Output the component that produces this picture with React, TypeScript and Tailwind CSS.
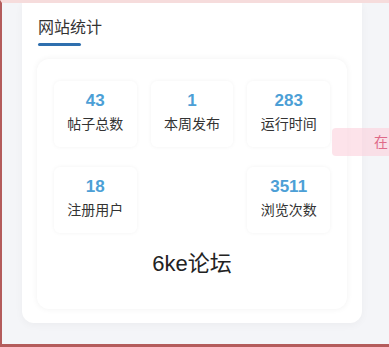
import React from "react";

const STATS = [
  { value: "43", label: "帖子总数" },
  { value: "1", label: "本周发布" },
  { value: "283", label: "运行时间" },
  { value: "18", label: "注册用户" },
  null,
  { value: "3511", label: "浏览次数" },
];

export default function App() {
  return (
    <div
      className="relative w-[389px] h-[347px] overflow-hidden bg-[#f4f5f8] border-l-2 border-b-[3px] border-t-[3px] border-l-[#b45c5c] border-b-[#b45c5c] border-t-[#f6dcdc]"
      style={{ fontFamily: '"Liberation Sans", "Noto Sans CJK SC", sans-serif' }}
    >
      <div className="ml-[20px] w-[340px] h-[320px] bg-white rounded-b-xl shadow-[0_2px_8px_rgba(0,0,0,0.04)] px-[15px] pt-[14px]">
        <div className="pl-[1px]">
          <div className="text-[16px] leading-[22px] text-[#333]">网站统计</div>
          <div className="mt-[4px] w-[43px] h-[3px] rounded-full bg-[#2f6fae]" />
        </div>
        <div className="mt-[13px] h-[250px] rounded-xl bg-white shadow-[0_0_6px_rgba(0,0,0,0.06)] px-[17px] pt-[22px]">
          <div className="grid grid-cols-3 gap-x-[14px] gap-y-[20px]">
            {STATS.map((s, i) =>
              s ? (
                <div
                  key={i}
                  className="h-[66px] rounded-md bg-white shadow-[0_0_4px_rgba(0,0,0,0.05)] flex flex-col items-center pt-[9px]"
                >
                  <div className="text-[17px] leading-[22px] font-bold text-[#4c9fd6]">{s.value}</div>
                  <div className="mt-[2px] text-[14px] leading-[20px] text-[#333]">{s.label}</div>
                </div>
              ) : (
                <div key={i} />
              )
            )}
          </div>
          <div className="mt-[16px] text-center text-[22px] leading-[30px] text-[#222]">6ke论坛</div>
        </div>
      </div>
      <div className="absolute left-[330px] top-[125px] w-[70px] h-[28px] bg-[rgba(251,208,220,0.6)] rounded-sm flex items-center pl-[42px]">
        <span className="text-[14px] text-[#df6a88]">在</span>
      </div>
    </div>
  );
}
